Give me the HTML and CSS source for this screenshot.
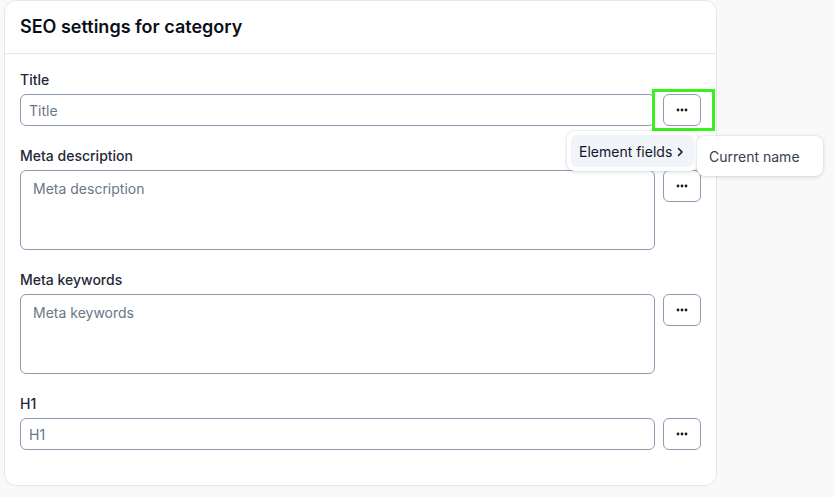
FILE: index.html
```html
<!DOCTYPE html>
<html>
<head>
<meta charset="utf-8">
<link rel="stylesheet" href="styles.css">
</head>
<body>
<div class="card">
  <div class="card-header">SEO settings for category</div>
  <div class="card-body">
    <div class="field">
      <label class="label">Title</label>
      <div class="row">
        <input class="input input-title" placeholder="Title">
        <div class="btn-wrap">
          <button class="btn"><svg width="12" height="4" viewBox="0 0 12 4"><circle cx="2" cy="2" r="1.4"/><circle cx="6" cy="2" r="1.4"/><circle cx="10" cy="2" r="1.4"/></svg></button>
          <div class="highlight"></div>
          <div class="menu">
            <div class="menu-item">Element fields <svg class="chev" width="7" height="10" viewBox="0 0 7 10"><path d="M1.5 1.5 L5 5 L1.5 8.5" fill="none" stroke="#111827" stroke-width="1.6" stroke-linecap="round" stroke-linejoin="round"/></svg></div>
          </div>
          <div class="submenu">
            <div class="submenu-item">Current name</div>
          </div>
        </div>
      </div>
    </div>
    <div class="field">
      <label class="label">Meta description</label>
      <div class="row">
        <textarea class="input textarea" placeholder="Meta description"></textarea>
        <button class="btn"><svg width="12" height="4" viewBox="0 0 12 4"><circle cx="2" cy="2" r="1.4"/><circle cx="6" cy="2" r="1.4"/><circle cx="10" cy="2" r="1.4"/></svg></button>
      </div>
    </div>
    <div class="field">
      <label class="label">Meta keywords</label>
      <div class="row">
        <textarea class="input textarea" placeholder="Meta keywords"></textarea>
        <button class="btn"><svg width="12" height="4" viewBox="0 0 12 4"><circle cx="2" cy="2" r="1.4"/><circle cx="6" cy="2" r="1.4"/><circle cx="10" cy="2" r="1.4"/></svg></button>
      </div>
    </div>
    <div class="field">
      <label class="label">H1</label>
      <div class="row">
        <input class="input" placeholder="H1">
        <button class="btn"><svg width="12" height="4" viewBox="0 0 12 4"><circle cx="2" cy="2" r="1.4"/><circle cx="6" cy="2" r="1.4"/><circle cx="10" cy="2" r="1.4"/></svg></button>
      </div>
    </div>
  </div>
</div>
</body>
</html>
```
FILE: styles.css
```css
* { box-sizing: border-box; }
html, body { margin: 0; padding: 0; }
body {
  background: #f9f9fa;
  font-family: Inter, "Noto Sans", sans-serif;
  color: #111827;
  width: 834px;
  height: 497px;
  overflow: hidden;
}
.card {
  margin-left: 4px;
  margin-top: 0;
  width: 713px;
  height: 486px;
  background: #fff;
  border: 1px solid #e2e6ee;
  border-radius: 12px;
}
.card-header {
  height: 53px;
  padding: 15px 15px 0;
  font-size: 18px;
  font-weight: 600;
  line-height: 22px;
  color: #0b0f19;
  border-bottom: 1px solid #e3e7ee;
}
.card-body {
  padding: 16px 15px 0;
  display: flex;
  flex-direction: column;
  gap: 20px;
}
.field { display: flex; flex-direction: column; gap: 4px; }
.label {
  font-size: 14px;
  line-height: 20px;
  font-weight: 500;
  color: #1f2937;
}
.row { display: flex; gap: 8px; align-items: flex-start; }
.input {
  flex: 1;
  height: 32px;
  border: 1px solid #8e9bb0;
  border-radius: 6px;
  padding: 0 8px;
  font-family: inherit;
  font-size: 14px;
  color: #111827;
  background: #fff;
  outline: none;
}
.input::placeholder { color: #6b7687; }
.input-title { margin-right: 3px; }
.textarea {
  height: 80px;
  padding: 9px 12px;
  resize: none;
  line-height: 18px;
}
.btn-wrap { position: relative; width: 38px; height: 32px; margin-left: -3px; }
.btn {
  width: 38px;
  height: 32px;
  flex: none;
  border: 1px solid #8e9bb0;
  border-radius: 6px;
  background: #fff;
  display: flex;
  align-items: center;
  justify-content: center;
  padding: 0;
}
.btn svg { fill: #111827; }
.highlight {
  position: absolute;
  left: -11px;
  top: -5px;
  width: 63px;
  height: 42px;
  border: 3px solid #3af01e;
}
.menu {
  position: absolute;
  left: -96px;
  top: 37px;
  width: 131px;
  height: 40px;
  background: #fff;
  border-radius: 8px;
  box-shadow: 0 1px 4px rgba(16, 24, 40, 0.14), 0 0 0 1px rgba(16, 24, 40, 0.03);
  padding: 4px;
}
.menu-item {
  height: 32px;
  background: #f1f4f9;
  border-radius: 6px;
  padding: 0 8px;
  display: flex;
  align-items: center;
  gap: 5px;
  font-size: 14px;
  color: #111827;
  white-space: nowrap;
}
.chev { margin-top: 1px; }
.submenu {
  position: absolute;
  left: 34px;
  top: 42px;
  width: 126px;
  height: 40px;
  background: #fff;
  border-radius: 8px;
  box-shadow: 0 1px 4px rgba(16, 24, 40, 0.14), 0 0 0 1px rgba(16, 24, 40, 0.03);
  padding: 0 12px;
  display: flex;
  align-items: center;
}
.submenu-item {
  font-size: 14px;
  color: #374151;
  white-space: nowrap;
}
```
